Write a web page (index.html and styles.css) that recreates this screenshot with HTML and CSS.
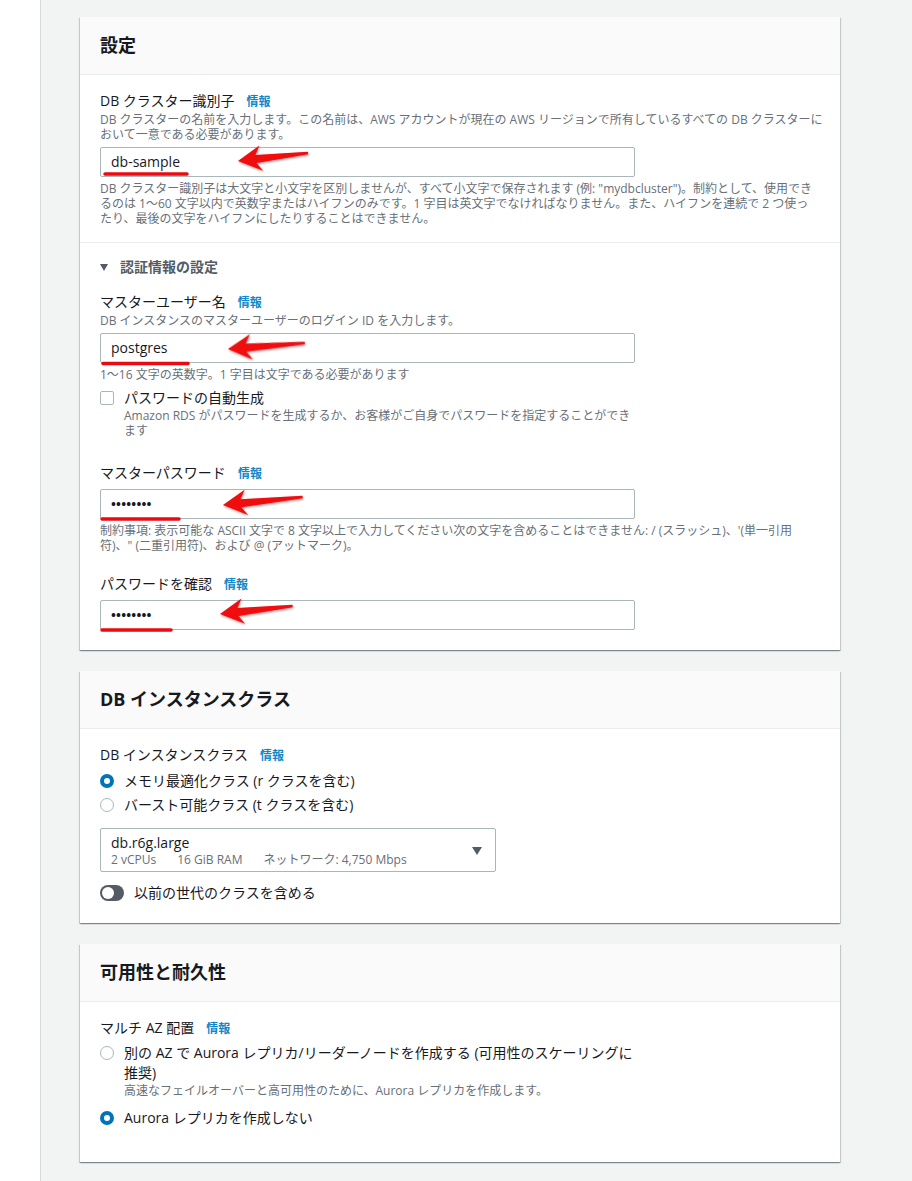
FILE: index.html
```html
<!DOCTYPE html>
<html lang="ja">
<head>
<meta charset="utf-8">
<title>設定</title>
<link rel="stylesheet" href="styles.css">
</head>
<body>
<div class="layout">
  <aside class="rail"></aside>
  <main class="content">

    <section class="card card-settings">
      <header class="card-header"><h2>設定</h2></header>
      <div class="block block-divided">
        <div class="label">DB クラスター識別子<span class="info">情報</span></div>
        <p class="desc">DB クラスターの名前を入力します。この名前は、AWS アカウントが現在の AWS リージョンで所有しているすべての DB クラスターに<br>おいて一意である必要があります。</p>
        <div class="input">db-sample</div>
        <p class="hint">DB クラスター識別子は大文字と小文字を区別しませんが、すべて小文字で保存されます (例: "mydbcluster")。制約として、使用でき<br>るのは 1〜60 文字以内で英数字またはハイフンのみです。1 字目は英文字でなければなりません。また、ハイフンを連続で 2 つ使っ<br>たり、最後の文字をハイフンにしたりすることはできません。</p>
      </div>
      <div class="block block-last">
        <div class="expander"><span class="caret"></span>認証情報の設定</div>

        <div class="label field-first">マスターユーザー名<span class="info">情報</span></div>
        <p class="desc">DB インスタンスのマスターユーザーのログイン ID を入力します。</p>
        <div class="input">postgres</div>
        <p class="hint">1〜16 文字の英数字。1 字目は文字である必要があります</p>

        <div class="check-row">
          <span class="checkbox"></span>
          <span class="check-label">パスワードの自動生成</span>
        </div>
        <p class="check-desc">Amazon RDS がパスワードを生成するか、お客様がご自身でパスワードを指定することができ<br>ます</p>

        <div class="label field-pw">マスターパスワード<span class="info">情報</span></div>
        <div class="input input-pw">••••••••</div>
        <p class="hint">制約事項: 表示可能な ASCII 文字で 8 文字以上で入力してください次の文字を含めることはできません: / (スラッシュ)、'(単一引用<br>符)、" (二重引用符)、および @ (アットマーク)。</p>

        <div class="label field-confirm">パスワードを確認<span class="info">情報</span></div>
        <div class="input input-pw">••••••••</div>
      </div>
    </section>

    <section class="card card-instance">
      <header class="card-header"><h2>DB インスタンスクラス</h2></header>
      <div class="block block-instance">
        <div class="label">DB インスタンスクラス<span class="info">情報</span></div>
        <div class="radio-group">
          <div class="opt opt-24"><span class="radio radio-on"></span><span>メモリ最適化クラス (r クラスを含む)</span></div>
          <div class="opt opt-24"><span class="radio"></span><span>バースト可能クラス (t クラスを含む)</span></div>
        </div>
        <div class="select">
          <div class="select-text">
            <div class="select-main">db.r6g.large</div>
            <div class="select-sub"><span>2 vCPUs</span><span>16 GiB RAM</span><span>ネットワーク: 4,750 Mbps</span></div>
          </div>
          <svg class="select-caret" width="10" height="8" viewBox="0 0 10 8"><path d="M0 0H10L5 8Z" fill="#545b64"/></svg>
        </div>
        <div class="toggle-row">
          <span class="toggle"><span class="knob"></span></span>
          <span>以前の世代のクラスを含める</span>
        </div>
      </div>
    </section>

    <section class="card card-az">
      <header class="card-header"><h2>可用性と耐久性</h2></header>
      <div class="block block-az">
        <div class="label">マルチ AZ 配置<span class="info">情報</span></div>
        <div class="opt opt-20 az-first">
          <span class="radio"></span>
          <div>
            <div>別の AZ で Aurora レプリカ/リーダーノードを作成する (可用性のスケーリングに<br>推奨)</div>
            <p class="opt-desc">高速なフェイルオーバーと高可用性のために、Aurora レプリカを作成します。</p>
          </div>
        </div>
        <div class="opt opt-22 az-second"><span class="radio radio-on"></span><span>Aurora レプリカを作成しない</span></div>
      </div>
    </section>

  </main>
</div>

<svg class="marks" width="912" height="1181" viewBox="0 0 912 1181" aria-hidden="true">
  <defs>
    <filter id="soft" x="-20%" y="-40%" width="140%" height="180%">
      <feDropShadow dx="0.6" dy="1.2" stdDeviation="0.9" flood-color="#600000" flood-opacity="0.45"/>
    </filter>
  </defs>
  <g fill="#f0080d" filter="url(#soft)">
    <polygon transform="translate(238 161) rotate(-6.5)" points="0,0 23,-13 18,-4 70.5,-1.2 70.5,1.2 18,4 24,12.5"/>
    <polygon transform="translate(228 349) rotate(-4.46)" points="0,0 23,-13 18,-4 77,-1.2 77,1.2 18,4 24,12.5"/>
    <polygon transform="translate(223 505) rotate(-5.71)" points="0,0 23,-13 18,-4 80,-1.2 80,1.2 18,4 24,12.5"/>
    <polygon transform="translate(220 614) rotate(-6.25)" points="0,0 23,-13 18,-4 73,-1.2 73,1.2 18,4 24,12.5"/>
  </g>
  <g stroke="#ec0a10" stroke-width="3.5" stroke-linecap="round" fill="none">
    <line x1="105" y1="174" x2="187" y2="174"/>
    <line x1="103" y1="363.5" x2="188" y2="363.5"/>
    <line x1="102" y1="519" x2="179" y2="519"/>
    <line x1="102" y1="630" x2="171" y2="630"/>
  </g>
</svg>
</body>
</html>
```

FILE: styles.css
```css
* { box-sizing: border-box; }

html, body {
  margin: 0;
  padding: 0;
  height: 1181px;
  overflow: hidden;
}

body {
  position: relative;
  font-family: "Open Sans", "Noto Sans CJK JP", sans-serif;
  font-size: 14px;
  line-height: 22px;
  color: #16191f;
  background: #f2f3f3;
}

.layout {
  display: flex;
  height: 1181px;
}

.rail {
  width: 41px;
  flex: none;
  background: #ffffff;
  border-right: 1px solid #d5dbdb;
}

.content {
  flex: 1;
  padding: 17px 0 0 39px;
  background: #f2f3f3;
}

.card {
  width: 760px;
  background: #ffffff;
  box-shadow: 0 1px 1px 0 rgba(0, 28, 36, 0.3), 1px 1px 1px 0 rgba(0, 28, 36, 0.15), -1px 1px 1px 0 rgba(0, 28, 36, 0.15);
}

.card + .card { margin-top: 21px; }

.card-header {
  height: 58px;
  padding: 17px 20px 0;
  background: #fafafa;
  border-bottom: 1px solid #eaeded;
}

.card-header h2 {
  margin: 0;
  font-size: 18px;
  line-height: 22px;
  font-weight: 700;
  color: #16191f;
}

.block { padding: 15px 20px 16px; }
.block-divided { border-bottom: 1px solid #eaeded; }
.block-last { padding: 13px 20px 20px; }
.block-instance { padding: 15px 20px 19px; }
.block-az { padding: 15px 20px 33px; }

.label {
  height: 22px;
  font-size: 14px;
  line-height: 22px;
  color: #16191f;
}

.info {
  margin-left: 12px;
  font-size: 12px;
  line-height: 12px;
  font-weight: 700;
  color: #0f88c8;
}

.desc, .hint, .check-desc, .opt-desc {
  margin: 0;
  font-size: 12px;
  line-height: 15px;
  color: #687078;
  white-space: nowrap;
}

.input {
  width: 535px;
  height: 30px;
  margin-top: 5px;
  padding: 0 10px;
  border: 1px solid #aab7b8;
  border-radius: 2px;
  font-size: 14px;
  line-height: 28px;
  color: #16191f;
  background: #ffffff;
}

.input-pw {
  font-weight: 700;
  letter-spacing: 0.2px;
  font-size: 13px;
}

.hint { margin-top: 4px; }

.expander {
  display: flex;
  align-items: center;
  font-size: 14px;
  font-weight: 700;
  line-height: 22px;
  color: #545b64;
}

.caret {
  width: 0;
  height: 0;
  margin: 0 12px 0 0;
  border-left: 4px solid transparent;
  border-right: 4px solid transparent;
  border-top: 7px solid #545b64;
}

.field-first { margin-top: 13px; }
.field-pw { margin-top: 24px; }
.field-confirm { margin-top: 20px; }

.check-row {
  display: flex;
  align-items: flex-start;
  gap: 10px;
  margin-top: 5px;
  line-height: 22px;
}

.checkbox {
  flex: none;
  width: 14px;
  height: 14px;
  margin-top: 4px;
  border: 1px solid #aab7b8;
  border-radius: 2px;
  background: #ffffff;
}

.check-desc {
  margin: -1px 0 0 24px;
}

.radio-group { margin-top: 3px; }

.opt {
  display: flex;
  align-items: flex-start;
  gap: 10px;
}

.opt-24 { line-height: 24px; }
.opt-24 .radio { margin-top: 5px; }
.opt-20 { line-height: 20px; }
.opt-20 .radio { margin-top: 3px; }
.opt-22 { line-height: 22px; }
.opt-22 .radio { margin-top: 4px; }

.radio {
  flex: none;
  width: 14px;
  height: 14px;
  border: 1px solid #aab7b8;
  border-radius: 50%;
  background: #ffffff;
}

.radio-on {
  border: 4px solid #0073bb;
}

.az-first { margin-top: 4px; }
.az-second { margin-top: 9px; }

.select {
  display: flex;
  align-items: center;
  justify-content: space-between;
  width: 396px;
  height: 44px;
  margin-top: 11px;
  padding: 5px 13px 4px 10px;
  border: 1px solid #aab7b8;
  border-radius: 2px;
}

.select-main {
  font-size: 14px;
  line-height: 18px;
  color: #16191f;
}

.select-sub {
  display: flex;
  gap: 21px;
  font-size: 12px;
  line-height: 16px;
  color: #687078;
}

.select-caret { flex: none; }

.toggle-row {
  display: flex;
  align-items: flex-start;
  gap: 10px;
  margin-top: 10px;
  line-height: 22px;
}

.toggle {
  flex: none;
  position: relative;
  width: 24px;
  height: 16px;
  margin-top: 3px;
  border-radius: 8px;
  background: #545b64;
}

.knob {
  position: absolute;
  top: 2px;
  left: 2px;
  width: 12px;
  height: 12px;
  border-radius: 50%;
  background: #ffffff;
}

.marks {
  position: absolute;
  top: 0;
  left: 0;
  pointer-events: none;
}
```
